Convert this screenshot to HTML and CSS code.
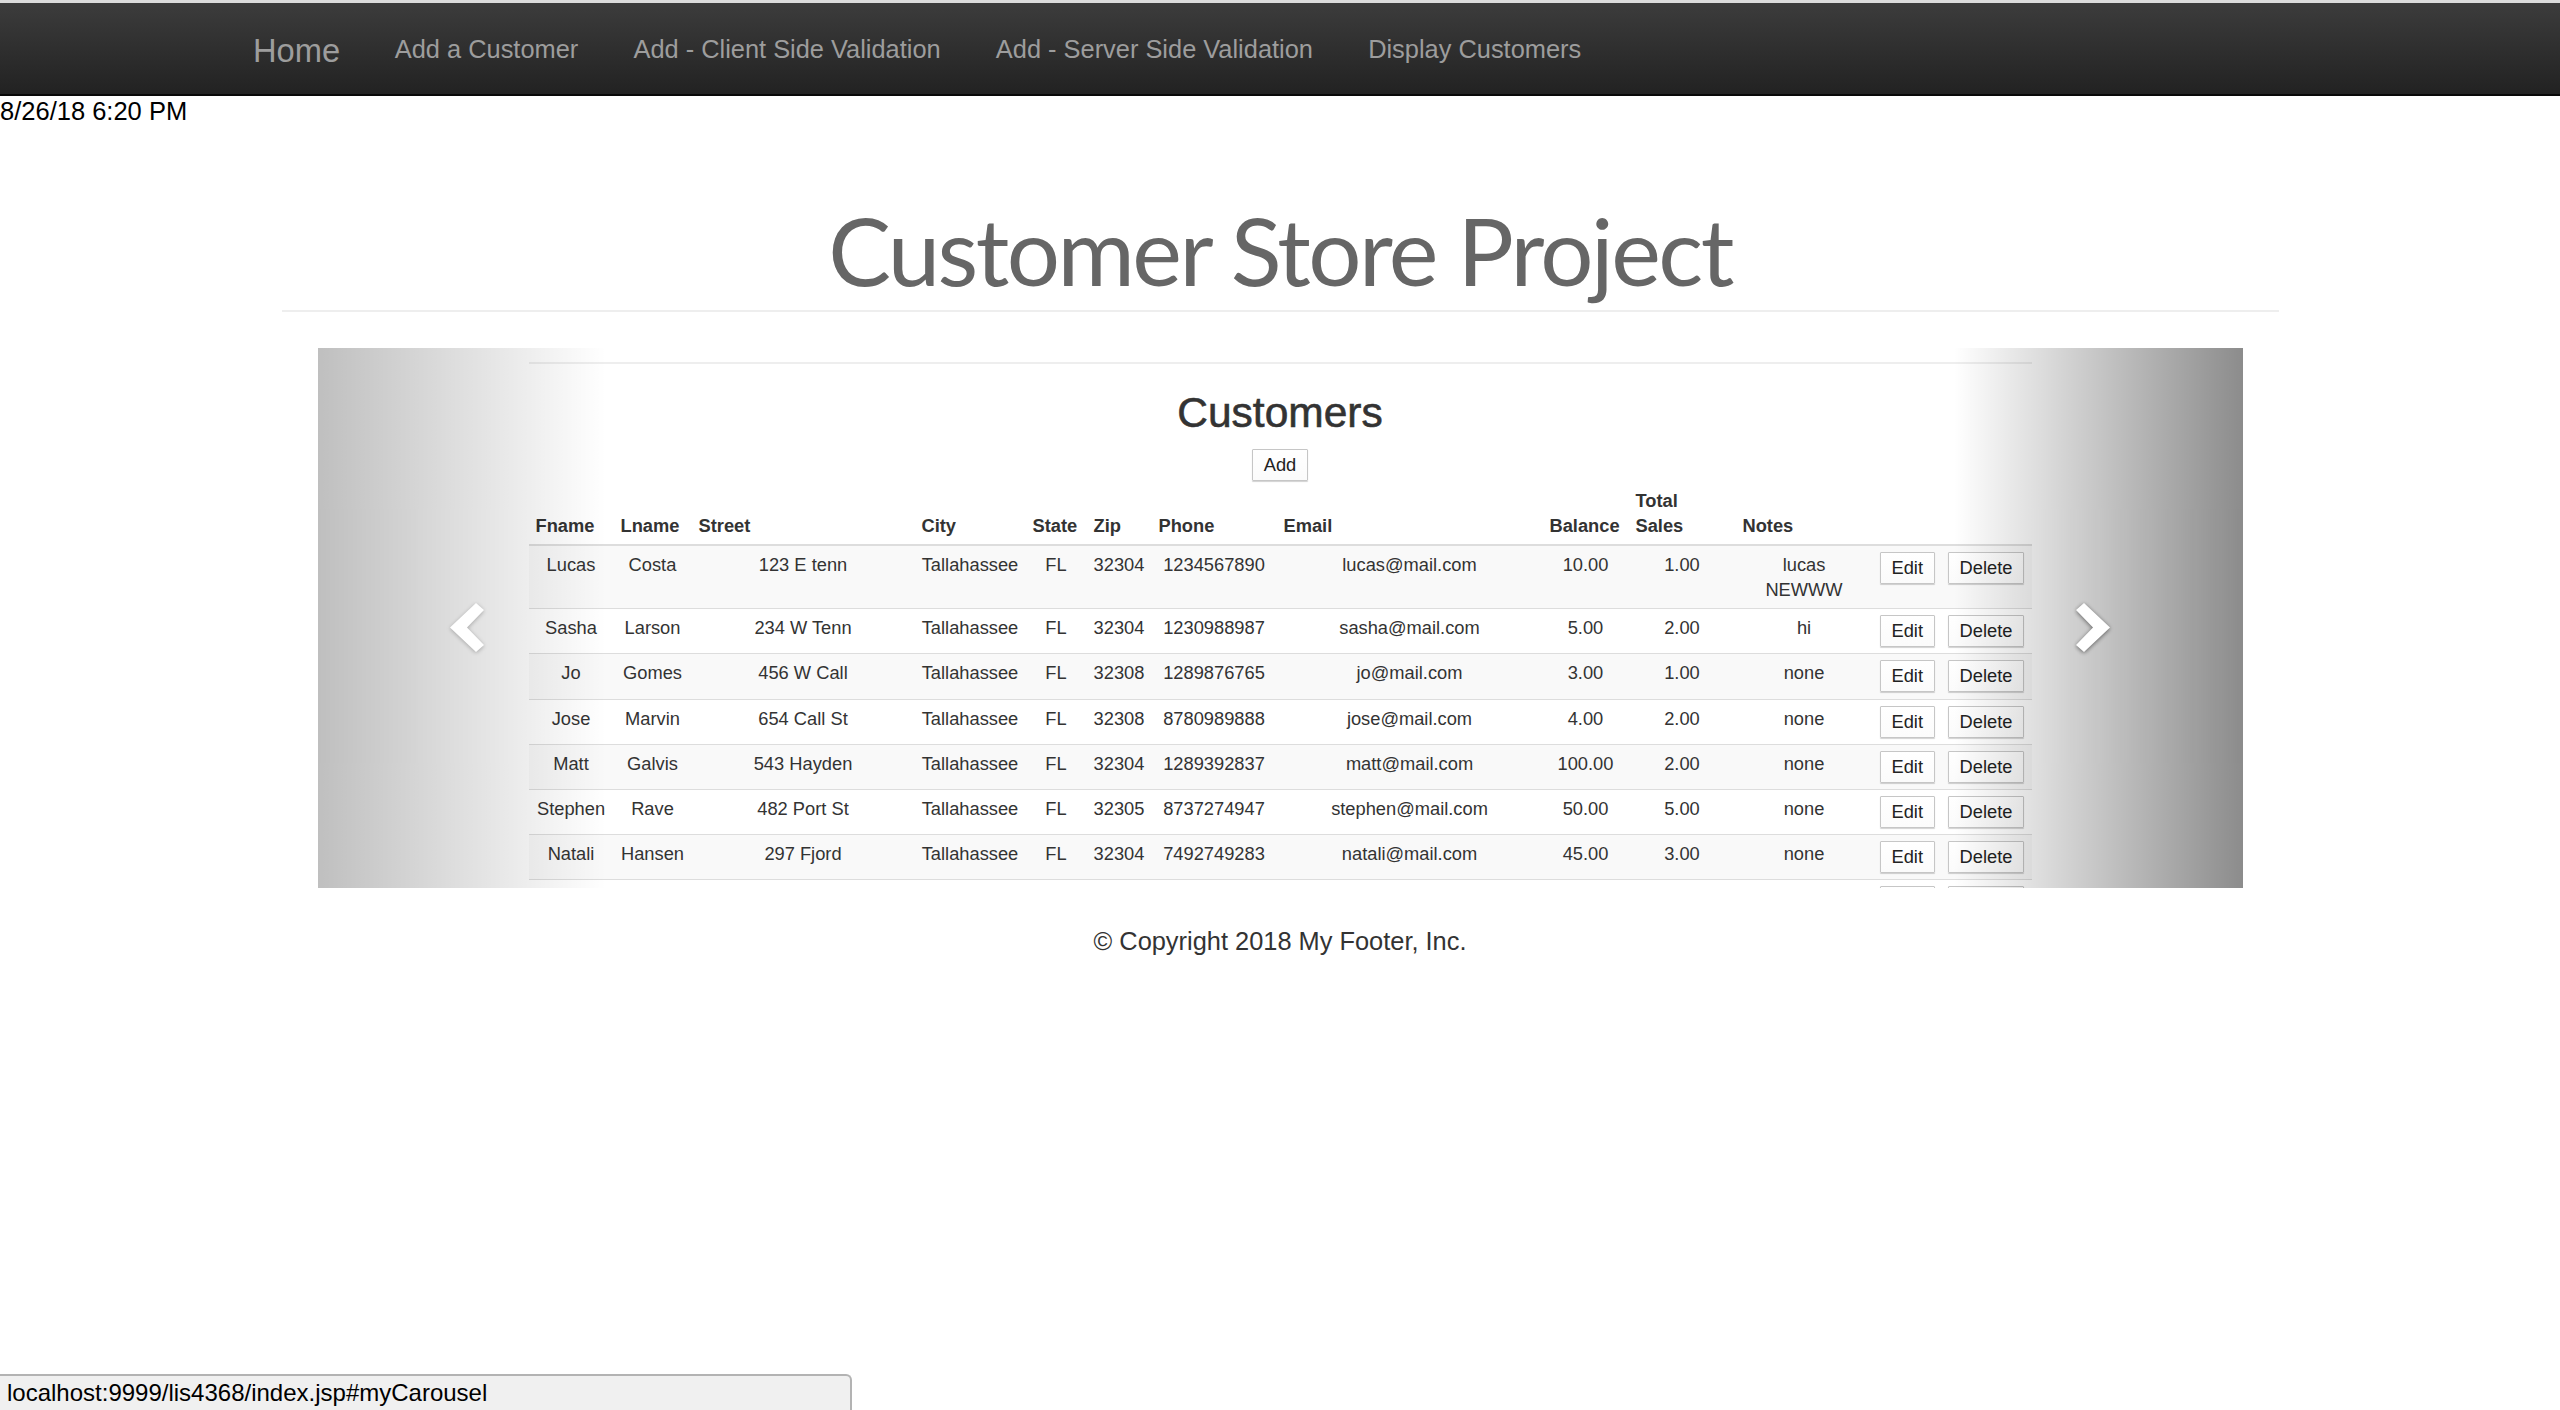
FILE: index.html
```html
<!DOCTYPE html>
<html lang="en">
<head>
<meta charset="utf-8">
<title>Customer Store Project</title>
<link rel="stylesheet" href="styles.css">
</head>
<body>
<div class="chrome-top"></div>
<nav class="navbar">
  <div class="nav-inner">
    <a class="brand" href="#">Home</a>
    <a class="nav-link" href="#">Add a Customer</a>
    <a class="nav-link" href="#">Add - Client Side Validation</a>
    <a class="nav-link" href="#">Add - Server Side Validation</a>
    <a class="nav-link" href="#">Display Customers</a>
  </div>
</nav>
<div class="date">8/26/18 6:20 PM</div>
<div class="page-header"><h1>Customer Store Project</h1></div>

<div class="carousel">
  <div class="slide">
    <div class="slide-rule"></div>
    <h2>Customers</h2>
    <div class="add-wrap"><button class="btn">Add</button></div>
    <table class="customers">
      <colgroup>
        <col style="width:85px"><col style="width:78px"><col style="width:223px"><col style="width:111px">
        <col style="width:61px"><col style="width:65px"><col style="width:125px"><col style="width:266px">
        <col style="width:86px"><col style="width:107px"><col style="width:137px"><col style="width:68px"><col style="width:91px">
      </colgroup>
      <thead>
        <tr><th>Fname</th><th>Lname</th><th>Street</th><th>City</th><th>State</th><th>Zip</th><th>Phone</th><th>Email</th><th>Balance</th><th>Total Sales</th><th>Notes</th><th></th><th></th></tr>
      </thead>
      <tbody>
        <tr><td>Lucas</td><td>Costa</td><td>123 E tenn</td><td>Tallahassee</td><td>FL</td><td>32304</td><td>1234567890</td><td>lucas@mail.com</td><td>10.00</td><td>1.00</td><td>lucas NEWWW</td><td><button class="btn">Edit</button></td><td><button class="btn">Delete</button></td></tr>
        <tr><td>Sasha</td><td>Larson</td><td>234 W Tenn</td><td>Tallahassee</td><td>FL</td><td>32304</td><td>1230988987</td><td>sasha@mail.com</td><td>5.00</td><td>2.00</td><td>hi</td><td><button class="btn">Edit</button></td><td><button class="btn">Delete</button></td></tr>
        <tr><td>Jo</td><td>Gomes</td><td>456 W Call</td><td>Tallahassee</td><td>FL</td><td>32308</td><td>1289876765</td><td>jo@mail.com</td><td>3.00</td><td>1.00</td><td>none</td><td><button class="btn">Edit</button></td><td><button class="btn">Delete</button></td></tr>
        <tr><td>Jose</td><td>Marvin</td><td>654 Call St</td><td>Tallahassee</td><td>FL</td><td>32308</td><td>8780989888</td><td>jose@mail.com</td><td>4.00</td><td>2.00</td><td>none</td><td><button class="btn">Edit</button></td><td><button class="btn">Delete</button></td></tr>
        <tr><td>Matt</td><td>Galvis</td><td>543 Hayden</td><td>Tallahassee</td><td>FL</td><td>32304</td><td>1289392837</td><td>matt@mail.com</td><td>100.00</td><td>2.00</td><td>none</td><td><button class="btn">Edit</button></td><td><button class="btn">Delete</button></td></tr>
        <tr><td>Stephen</td><td>Rave</td><td>482 Port St</td><td>Tallahassee</td><td>FL</td><td>32305</td><td>8737274947</td><td>stephen@mail.com</td><td>50.00</td><td>5.00</td><td>none</td><td><button class="btn">Edit</button></td><td><button class="btn">Delete</button></td></tr>
        <tr><td>Natali</td><td>Hansen</td><td>297 Fjord</td><td>Tallahassee</td><td>FL</td><td>32304</td><td>7492749283</td><td>natali@mail.com</td><td>45.00</td><td>3.00</td><td>none</td><td><button class="btn">Edit</button></td><td><button class="btn">Delete</button></td></tr>
        <tr><td></td><td></td><td></td><td></td><td></td><td></td><td></td><td></td><td></td><td></td><td></td><td><button class="btn">Edit</button></td><td><button class="btn">Delete</button></td></tr>
      </tbody>
    </table>
  </div>
  <a class="control control-left" href="#myCarousel">
    <svg class="chev chev-left" width="35" height="50" viewBox="0 0 35 50"><polygon points="35,7 27,0 1,24.5 27,49 35,42 18,24.5" fill="#fff"/></svg>
  </a>
  <a class="control control-right" href="#myCarousel">
    <svg class="chev chev-right" width="35" height="50" viewBox="0 0 35 50"><polygon points="0,7 8,0 34,24.5 8,49 0,42 17,24.5" fill="#fff"/></svg>
  </a>
</div>

<footer class="footer">© Copyright 2018 My Footer, Inc.</footer>

<div class="statusbar">localhost:9999/lis4368/index.jsp#myCarousel</div>
</body>
</html>
```

FILE: styles.css
```css
html, body {
  margin: 0;
  padding: 0;
}
body {
  font-family: "Liberation Sans", Arial, Helvetica, sans-serif;
  font-size: 25.5px;
  color: #333;
  background: #fff;
}

.chrome-top {
  height: 3px;
  background: #dcdcdc;
}

.navbar {
  height: 91px;
  background: linear-gradient(to bottom, #3c3c3c 0%, #222 100%);
  border-bottom: 2px solid #080808;
}
.nav-inner {
  display: flex;
  align-items: flex-start;
  padding-left: 226px;
}
.brand {
  font-size: 32.7px;
  line-height: 37px;
  padding: 29px 27px 0;
  color: #9d9d9d;
  text-decoration: none;
}
.nav-link {
  font-size: 25.4px;
  line-height: 37px;
  padding: 28px 27.6px 0;
  color: #9d9d9d;
  text-decoration: none;
}

.date {
  font-size: 25.5px;
  line-height: 30px;
  color: #000;
}

.page-header {
  width: 1997px;
  margin: 70.5px auto 0;
  padding-bottom: 7px;
  border-bottom: 2px solid #eee;
  text-align: center;
}
.page-header h1 {
  margin: 0;
  font-family: "Lato", "Open Sans", sans-serif;
  font-weight: 400;
  font-size: 94px;
  line-height: 106.5px;
  letter-spacing: -2.5px;
  color: #666;
}

.carousel {
  position: relative;
  width: 1925px;
  height: 540px;
  margin: 36px auto 0;
  overflow: hidden;
  background: #fff;
}
.slide {
  width: 1503px;
  margin: 0 auto;
  padding-top: 14px;
}
.slide-rule {
  border-top: 2px solid #eee;
}
.slide h2 {
  margin: 26px 0 0;
  font-size: 42.5px;
  line-height: 46px;
  font-weight: 500;
  -webkit-text-stroke: 0.6px #333;
  text-align: center;
  color: #333;
}
.add-wrap {
  margin-top: 13px;
  text-align: center;
  line-height: 0;
}

.btn {
  display: inline-block;
  vertical-align: top;
  height: 32px;
  padding: 0 11px;
  font-family: "Liberation Sans", Arial, sans-serif;
  font-size: 18.3px;
  line-height: 30px;
  color: #222;
  background: linear-gradient(to bottom, #fff 0%, #fbfbfb 100%);
  border: 1px solid #c6c6c6;
  border-radius: 1px;
  box-shadow: 0 1px 1px rgba(0, 0, 0, 0.18);
}

.customers {
  width: 1503px;
  margin-top: 1px;
  table-layout: fixed;
  border-collapse: collapse;
  font-size: 18.3px;
  line-height: 25px;
  color: #333;
}
.customers th {
  padding: 6px 7px;
  text-align: left;
  vertical-align: bottom;
  font-weight: 700;
  border-bottom: 2px solid #ddd;
}
.customers td {
  padding: 6px 7px 6.2px;
  text-align: center;
  vertical-align: top;
  border-top: 1px solid #ddd;
}
.customers tbody tr:nth-child(odd) {
  background: #f9f9f9;
}

.control {
  position: absolute;
  top: 0;
  bottom: 0;
  width: 15%;
}
.control-left {
  left: 0;
  background: linear-gradient(to right, rgba(0, 0, 0, 0.5) 0%, rgba(0, 0, 0, 0.0001) 100%);
  opacity: 0.5;
}
.control-right {
  right: 0;
  background: linear-gradient(to right, rgba(0, 0, 0, 0.0001) 0%, rgba(0, 0, 0, 0.5) 100%);
  opacity: 0.9;
}
.chev {
  position: absolute;
  top: 255px;
  filter: drop-shadow(0 1px 2px rgba(0, 0, 0, 0.6));
}
.chev-left {
  left: 131px;
}
.chev-right {
  right: 132px;
}

.footer {
  margin-top: 35px;
  text-align: center;
  font-size: 25.4px;
  line-height: 37px;
  color: #333;
}

.statusbar {
  position: fixed;
  left: 0;
  bottom: 0;
  width: 843px;
  height: 34px;
  padding-left: 7px;
  background: #f0f0f0;
  border-top: 2px solid #b3b3b3;
  border-right: 2px solid #b3b3b3;
  border-top-right-radius: 6px;
  font-size: 24px;
  line-height: 34px;
  color: #000;
}
```
